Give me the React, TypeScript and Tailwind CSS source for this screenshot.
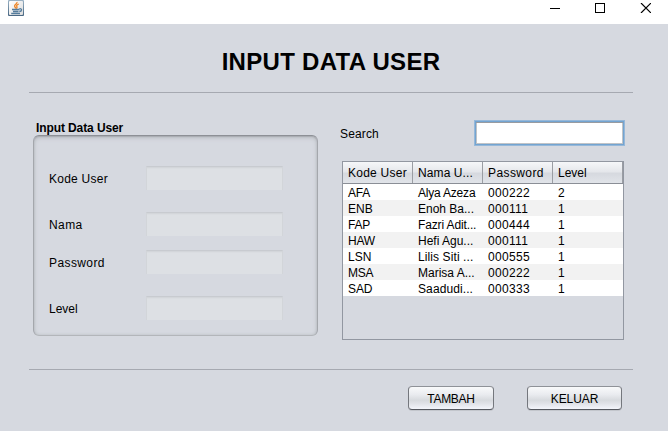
const rows = [
  { code: "AFA", codeCls: "tracking-[-0.2px]", name: "Alya Azeza", nameCls: "tracking-[-0.2px]", pass: "000222", level: "2" },
  { code: "ENB", codeCls: "tracking-[0px]", name: "Enoh Ba...", nameCls: "tracking-[0px]", pass: "000111", level: "1" },
  { code: "FAP", codeCls: "tracking-[-0.2px]", name: "Fazri Adit...", nameCls: "tracking-[-0.13px]", pass: "000444", level: "1" },
  { code: "HAW", codeCls: "tracking-[-0.2px]", name: "Hefi Agu...", nameCls: "tracking-[0px]", pass: "000111", level: "1" },
  { code: "LSN", codeCls: "tracking-[0px]", name: "Lilis Siti ...", nameCls: "tracking-[0.1px]", pass: "000555", level: "1" },
  { code: "MSA", codeCls: "tracking-[-0.2px]", name: "Marisa A...", nameCls: "tracking-[0px]", pass: "000222", level: "1" },
  { code: "SAD", codeCls: "tracking-[-0.1px]", name: "Saadudi...", nameCls: "tracking-[0.1px]", pass: "000333", level: "1" },
];

const columns = [
  { label: "Kode User", cls: "tracking-[0.25px]" },
  { label: "Nama U...", cls: "tracking-[0.1px]" },
  { label: "Password", cls: "tracking-[0.4px]" },
  { label: "Level", cls: "tracking-[0px]" },
];

const fields = [
  { label: "Kode User", cls: "tracking-[0.25px]", gap: "mt-[30px]" },
  { label: "Nama", cls: "tracking-[0.4px]", gap: "mt-[22px]" },
  { label: "Password", cls: "tracking-[0.4px]", gap: "mt-[14px]" },
  { label: "Level", cls: "tracking-[0px]", gap: "mt-[22px]" },
];

function JavaIcon() {
  return (
    <svg width="16" height="16" viewBox="0 0 16 16" fill="none">
      <defs>
        <linearGradient id="frame" x1="0" y1="0" x2="0" y2="1">
          <stop offset="0" stopColor="#9db4c6" />
          <stop offset="1" stopColor="#466581" />
        </linearGradient>
        <linearGradient id="face" x1="0" y1="0" x2="1" y2="1">
          <stop offset="0" stopColor="#ffffff" />
          <stop offset="1" stopColor="#dcdcdc" />
        </linearGradient>
      </defs>
      <rect width="16" height="16" rx="1" fill="url(#frame)" />
      <rect x="1" y="1" width="14" height="14" rx="1" fill="url(#face)" />
      <path d="M9 2C9.400 4 6.300 4.500 6.600 6.200C6.800 7.200 7.900 7.500 7.700 8.600M10.800 4C8.600 4.900 8.200 5.700 8.900 6.600C9.400 7.300 8.900 8 8.400 8.600" stroke="#ee8322" strokeWidth="1.3" />
      <path d="M4 9.500H11.500M5 11.500H10.500M11.500 8.700C14.400 8.200 14.200 11.500 11.300 11.500M3.200 13.500H12" stroke="#557c9c" strokeWidth="1.3" />
    </svg>
  );
}

function Field({ label, cls, gap }: { label: string; cls: string; gap: string }) {
  return (
    <div className={"flex h-6 items-center " + gap}>
      <span className={"w-[97px] pt-px leading-[14px] " + cls}>{label}</span>
      <input
        disabled
        className="h-6 w-[137px] border-x border-t border-x-[#d2d5d9] border-t-[#c8cbd0] bg-[#dde0e4] shadow-[inset_0_1px_0_#d3d6da,inset_0_2px_0_#dadde1]"
      />
    </div>
  );
}

function NimbusButton({ label, width, cls }: { label: string; width: string; cls: string }) {
  return (
    <button
      className={
        "h-6 rounded-[4px] border border-t-[#8f9298] border-x-[#74777d] border-b-[#55585f] bg-[linear-gradient(#f9fafb_0%,#e9ebef_35%,#d7dade_60%,#dee0e5_72%,#f3f5fb_100%)] pt-px leading-[14px] shadow-[0_1px_0_#c3c6cc] " +
        width + " " + cls
      }
    >
      {label}
    </button>
  );
}

export default function App() {
  return (
    <div className="flex h-[431px] w-[668px] flex-col overflow-hidden bg-[#d6d9e0] font-['Liberation_Sans',Arial,sans-serif] text-[12px] text-black">
      <header className="flex h-6 items-start justify-between bg-white pl-2">
        <JavaIcon />
        <div className="flex pr-[17px] pt-[3px]">
          <svg width="101" height="10" viewBox="0 0 101 10" fill="none" stroke="black" shapeRendering="crispEdges">
            <path d="M0 5.500H10" />
            <rect x="45.500" y="0.500" width="9" height="9" />
            <path d="M91 0L101 10M101 0L91 10" strokeWidth="1.2" shapeRendering="auto" />
          </svg>
        </div>
      </header>
      <main className="flex flex-1 flex-col pl-[29px] pr-[35px]">
        <h1 className="flex h-[68px] items-center justify-center pt-[7px] text-[24px] font-bold tracking-[0.3px]">INPUT DATA USER</h1>
        <hr className="h-px shrink-0 border-0 bg-[#a6a9b1]" />
        <div className="flex h-[276px] pl-1">
          <section className="flex w-[285px] flex-col pt-7">
            <h2 className="h-[14px] pl-[3px] leading-[14px] font-bold tracking-[-0.1px]">Input Data User</h2>
            <div className="h-[201px] rounded-[6px] border border-t-[#8d9096] border-x-[#a4a7ac] border-b-[#b3b6ba] pl-[15px] shadow-[inset_0_1px_1px_#a9acb2,inset_0_2px_4px_#bbbec4,inset_0_0_3px_#bfc2c6]">
              {fields.map((f) => (
                <Field key={f.label} {...f} />
              ))}
            </div>
          </section>
          <section className="ml-[22px] flex w-[285px] flex-col pt-[27px]">
            <div className="flex h-[26px] items-center justify-between">
              <span className="pt-px tracking-[0.15px]">Search</span>
              <input className="h-[26px] w-[151px] border border-[#96b8d9] bg-white shadow-[inset_0_0_0_1px_#73a4d1,inset_0_2px_0_#989ba0,inset_0_0_0_2px_#c0c3c7] outline-none" />
            </div>
            <div className="ml-[2px] mt-[15px] h-[179px] w-[282px] border border-[#9297a1]">
              <div className="grid h-[22px] grid-cols-4 border-b border-[#8a8e96] bg-[linear-gradient(#f6f7f9_0%,#e5e7eb_45%,#d6d9df_55%,#e1e4e9_100%)]">
                {columns.map((c) => (
                  <div key={c.label} className={"border-r border-[#9a9da3] pl-[5px] pt-1 leading-[14px] whitespace-nowrap " + c.cls}>
                    {c.label}
                  </div>
                ))}
              </div>
              {rows.map((r) => (
                <div key={r.code} className="grid h-4 grid-cols-4 bg-white leading-4 whitespace-nowrap odd:bg-[#f2f2f2]">
                  <span className={"pl-[5px] pt-px " + r.codeCls}>{r.code}</span>
                  <span className={"pl-[5px] pt-px " + r.nameCls}>{r.name}</span>
                  <span className="pl-[5px] pt-px tracking-[0.33px]">{r.pass}</span>
                  <span className="pl-[5px] pt-px">{r.level}</span>
                </div>
              ))}
            </div>
          </section>
        </div>
        <hr className="h-px shrink-0 border-0 bg-[#a6a9b1]" />
        <footer className="flex justify-end gap-[33px] pr-[11px] pt-4">
          <NimbusButton label="TAMBAH" width="w-[86px]" cls="tracking-[-0.3px]" />
          <NimbusButton label="KELUAR" width="w-[95px]" cls="tracking-[-0.1px]" />
        </footer>
      </main>
    </div>
  );
}
